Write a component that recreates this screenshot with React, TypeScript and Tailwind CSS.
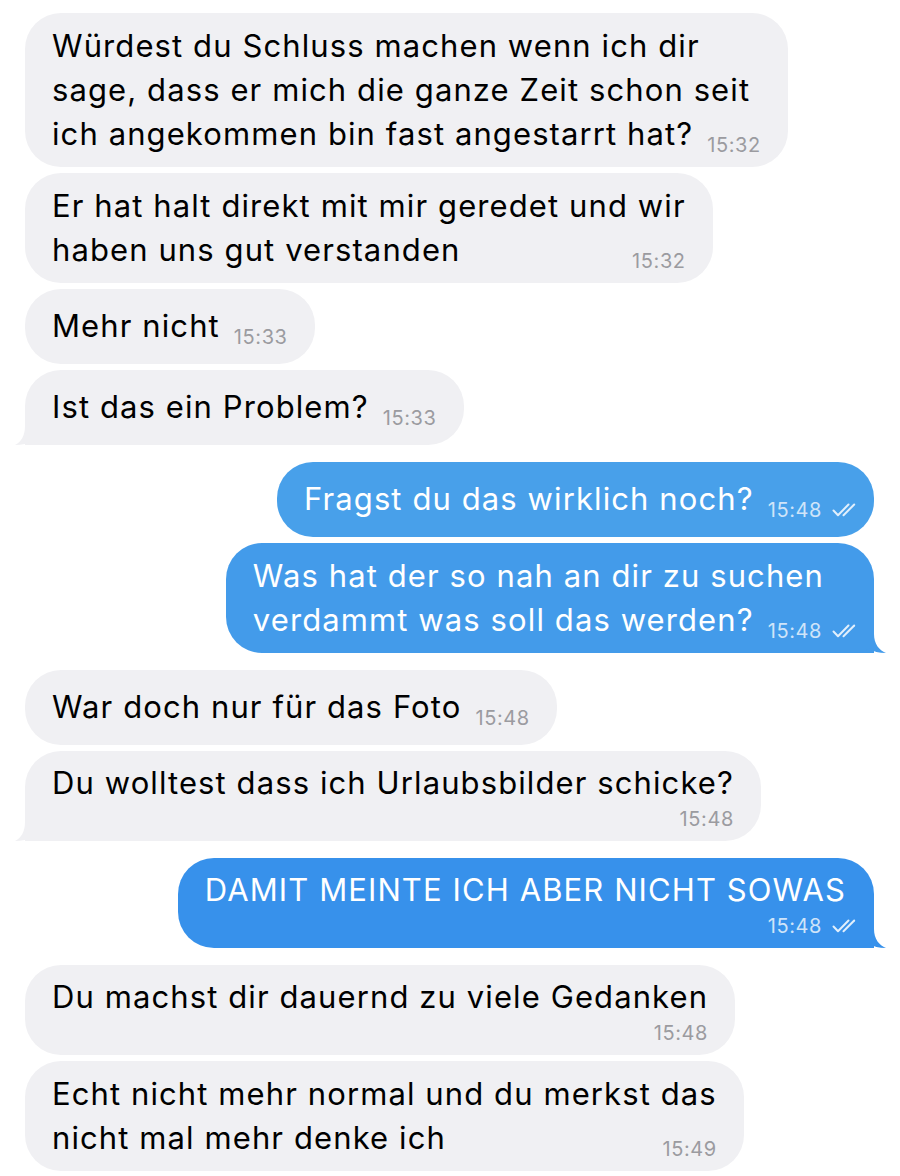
type Side = 'in' | 'out';

type Msg = {
  side: Side;
  lines: string[];
  time: string;
  timeBelow?: boolean;
  tail?: boolean;
  groupStart?: boolean;
  color?: string;
};

const MESSAGES: Msg[] = [
  {
    side: 'in',
    lines: [
      'Würdest du Schluss machen wenn ich dir',
      'sage, dass er mich die ganze Zeit schon seit',
      'ich angekommen bin fast angestarrt hat?',
    ],
    time: '15:32',
  },
  {
    side: 'in',
    lines: ['Er hat halt direkt mit mir geredet und wir', 'haben uns gut verstanden'],
    time: '15:32',
  },
  { side: 'in', lines: ['Mehr nicht'], time: '15:33' },
  { side: 'in', lines: ['Ist das ein Problem?'], time: '15:33', tail: true },
  { side: 'out', lines: ['Fragst du das wirklich noch?'], time: '15:48', groupStart: true, color: 'bg-[#48a0ea]' },
  {
    side: 'out',
    lines: ['Was hat der so nah an dir zu suchen', 'verdammt was soll das werden?'],
    time: '15:48',
    tail: true,
    color: 'bg-[#439bea]',
  },
  { side: 'in', lines: ['War doch nur für das Foto'], time: '15:48', groupStart: true },
  {
    side: 'in',
    lines: ['Du wolltest dass ich Urlaubsbilder schicke?'],
    time: '15:48',
    timeBelow: true,
    tail: true,
  },
  {
    side: 'out',
    lines: ['DAMIT MEINTE ICH ABER NICHT SOWAS'],
    time: '15:48',
    timeBelow: true,
    tail: true,
    groupStart: true,
    color: 'bg-[#3791eb]',
  },
  {
    side: 'in',
    lines: ['Du machst dir dauernd zu viele Gedanken'],
    time: '15:48',
    timeBelow: true,
    groupStart: true,
  },
  {
    side: 'in',
    lines: ['Echt nicht mehr normal und du merkst das', 'nicht mal mehr denke ich'],
    time: '15:49',
  },
];

function DoubleCheck() {
  return (
    <svg width="24" height="14" viewBox="0 0 24 14" fill="none" className="shrink-0">
      <path d="M1.5 7.5 L6 12.2 L16.5 1.5" stroke="#e1effc" strokeWidth="2" strokeLinecap="round" strokeLinejoin="round" />
      <path d="M11.5 12.2 L22.2 1.5" stroke="#e1effc" strokeWidth="2" strokeLinecap="round" />
    </svg>
  );
}

function Time({ side, time }: { side: Side; time: string }) {
  return (
    <span className="flex items-center gap-[10px] leading-[22px]">
      <span className={`text-[20px] tracking-[0.6px] ${side === 'in' ? 'text-[#9b9ba0]' : 'text-[#cfe4f9]'}`}>{time}</span>
      {side === 'out' && <DoubleCheck />}
    </span>
  );
}

function Tail({ side, fill }: { side: Side; fill: string }) {
  if (side === 'in') {
    return (
      <svg width="40" height="32" viewBox="0 0 40 32" className="absolute bottom-0 left-[-10px]">
        <path d="M10 0 L10 13 C10 23 6 29 0 32 C7 32 13 30.5 17 27.5 C22 31 28 32 40 32 L40 0 Z" fill={fill} />
      </svg>
    );
  }
  return (
    <svg width="40" height="32" viewBox="0 0 40 32" className="absolute bottom-0 right-[-12px]">
      <path d="M28 0 L28 13 C28 23 33 29 40 32 C33 32 27 30.5 23 27.5 C18 31 12 32 0 32 L0 0 Z" fill={fill} />
    </svg>
  );
}

function Bubble({ msg }: { msg: Msg }) {
  const incoming = msg.side === 'in';
  const bg = incoming ? 'bg-[#f0f0f3]' : msg.color ?? 'bg-[#3d96ea]';
  const fill = incoming ? '#f0f0f3' : msg.color?.slice(4, -1) ?? '#3d96ea';
  const text = incoming ? 'text-black' : 'text-white';
  const multi = msg.lines.length > 1;
  const corner = msg.tail ? (incoming ? 'rounded-bl-none' : 'rounded-br-none') : '';

  const pad = msg.timeBelow
    ? 'pt-[10px] pb-[11px]'
    : multi
      ? 'py-[11px]'
      : 'pt-[15px] pb-[16px]';

  const last = msg.lines[msg.lines.length - 1];
  const head = msg.lines.slice(0, -1);
  const line = 'whitespace-nowrap text-[31px] leading-[44px] tracking-[1.1px]';

  return (
    <div
      className={`relative rounded-[36px] ${corner} ${bg} ${text} ${pad} pl-[27px] ${incoming ? 'pr-[27px]' : 'pr-[18px]'} ${msg.groupStart ? 'mt-[11px]' : ''}`}
    >
      {msg.tail && <Tail side={msg.side} fill={fill} />}
      <div className="relative">
        {head.map((l) => (
          <div key={l} className={line}>
            {l}
          </div>
        ))}
        {msg.timeBelow ? (
          <>
            <div className={`${line} ${incoming ? '' : 'pr-[10px]'}`}>{last}</div>
            <div className="mt-[3px] flex justify-end">
              <Time side={msg.side} time={msg.time} />
            </div>
          </>
        ) : (
          <div className="flex items-end">
            <span className={line}>{last}</span>
            <span className="ml-auto pl-[14px]">
              <Time side={msg.side} time={msg.time} />
            </span>
          </div>
        )}
      </div>
    </div>
  );
}

export default function App() {
  return (
    <main className="min-h-[1176px] w-[900px] overflow-hidden bg-white font-['Inter','Liberation_Sans',sans-serif]">
      <div className="flex flex-col gap-[6px] pt-[13px] pl-[25px] pr-[26px]">
        {MESSAGES.map((m, i) => (
          <div key={i} className={`flex ${m.side === 'in' ? 'justify-start' : 'justify-end'}`}>
            <Bubble msg={m} />
          </div>
        ))}
      </div>
    </main>
  );
}
